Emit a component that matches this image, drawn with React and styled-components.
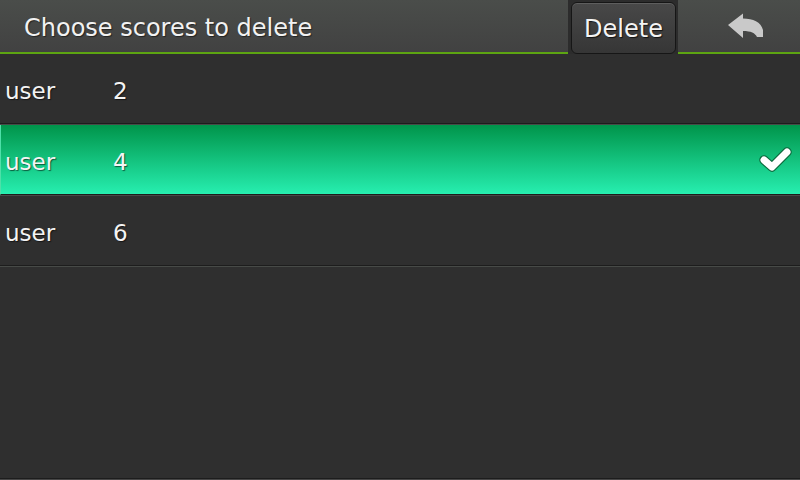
import React from "react";
import styled, { createGlobalStyle } from "styled-components";

const Global = createGlobalStyle`
  html, body { margin: 0; padding: 0; background: #2f2f2f; }
  body { font-family: "DejaVu Sans", "Liberation Sans", sans-serif; }
`;

const Screen = styled.div`
  width: 800px;
  height: 480px;
  display: flex;
  flex-direction: column;
  background: #2f2f2f;
  overflow: hidden;
`;

const Header = styled.header`
  display: flex;
  height: 54px;
  flex: none;
  background: linear-gradient(#4a4d4a, #414141);
`;

const TitleCell = styled.div`
  flex: 1;
  display: flex;
  align-items: center;
  padding: 4px 0 0 24px;
  border-bottom: 2px solid #5da512;
  color: #f2f2f2;
  font-size: 24px;
  text-shadow: 1px 1px 1px rgba(0, 0, 0, 0.5);
`;

const ButtonWell = styled.div`
  width: 110px;
  flex: none;
  display: flex;
  padding: 2px 2px 0 3px;
  box-sizing: border-box;
  background: #2c2c2c;
`;

const DeleteButton = styled.button`
  flex: 1;
  margin: 0;
  border: 1px solid #161616;
  border-radius: 6px;
  background: linear-gradient(#484848, #363636);
  box-shadow: inset 0 1px 0 rgba(255, 255, 255, 0.12);
  color: #f4f4f4;
  font-family: "DejaVu Sans", sans-serif;
  font-size: 24px;
  padding: 2px 0 0;
  text-shadow: 1px 1px 1px rgba(0, 0, 0, 0.7);
`;

const BackCell = styled.div`
  width: 122px;
  flex: none;
  display: flex;
  align-items: center;
  justify-content: center;
  padding: 0 0 1px 12px;
  box-sizing: border-box;
  border-bottom: 2px solid #5da512;
`;

const List = styled.div`
  display: flex;
  flex-direction: column;
  flex: 1;
`;

const Row = styled.div`
  height: 70px;
  display: flex;
  align-items: center;
  box-sizing: border-box;
  color: #f4f4f4;
  font-size: 23px;
  text-shadow: 1px 1px 1px rgba(0, 0, 0, 0.55);
  border-bottom: 1px solid #1d1d1d;
  box-shadow: 0 1px 0 #474a47;
  margin-bottom: 1px;
  background: ${(p) =>
    p.$selected ? "linear-gradient(#00944a, #27efb0)" : "transparent"};
  border-left: ${(p) => (p.$selected ? "1px solid #4ee0a8" : "0")};
`;

const Name = styled.span`
  width: 108px;
  padding-left: ${(p) => (p.$selected ? "4px" : "5px")};
  padding-top: 4px;
  flex: none;
`;

const Score = styled.span`
  flex: 1;
  padding-top: 4px;
`;

const Check = styled.span`
  display: flex;
  margin-right: 7px;
`;

const Footer = styled.div`
  height: 2px;
  flex: none;
  border-top: 1px solid #1d1d1d;
  background: #474747;
  box-sizing: border-box;
`;

const BackArrow = () => (
  <svg width="37" height="26" viewBox="0 0 37 26">
    <path
      d="M1 12 L16 0.5 L16 5.5 C26 5.5 34 9 36 17 L36 24 L30 24 C28 20 24 18 16 18 L16 25 Z"
      fill="#c9c9c9"
    />
  </svg>
);

const CheckMark = () => (
  <svg width="34" height="28" viewBox="0 0 34 28">
    <polyline
      points="5,14 13,21 28,6"
      fill="none"
      stroke="#0b6a3d"
      strokeWidth="9.5"
      strokeLinejoin="round"
      strokeLinecap="round"
    />
    <polyline
      points="5,14 13,21 28,6"
      fill="none"
      stroke="#ffffff"
      strokeWidth="7"
      strokeLinejoin="round"
      strokeLinecap="round"
    />
  </svg>
);

const scores = [
  { name: "user", score: 2, selected: false },
  { name: "user", score: 4, selected: true },
  { name: "user", score: 6, selected: false },
];

export default function App() {
  return (
    <Screen>
      <Global />
      <Header>
        <TitleCell>Choose scores to delete</TitleCell>
        <ButtonWell>
          <DeleteButton>Delete</DeleteButton>
        </ButtonWell>
        <BackCell>
          <BackArrow />
        </BackCell>
      </Header>
      <List>
        {scores.map((s, i) => (
          <Row key={i} $selected={s.selected}>
            <Name $selected={s.selected}>{s.name}</Name>
            <Score>{s.score}</Score>
            {s.selected && (
              <Check>
                <CheckMark />
              </Check>
            )}
          </Row>
        ))}
      </List>
      <Footer />
    </Screen>
  );
}
